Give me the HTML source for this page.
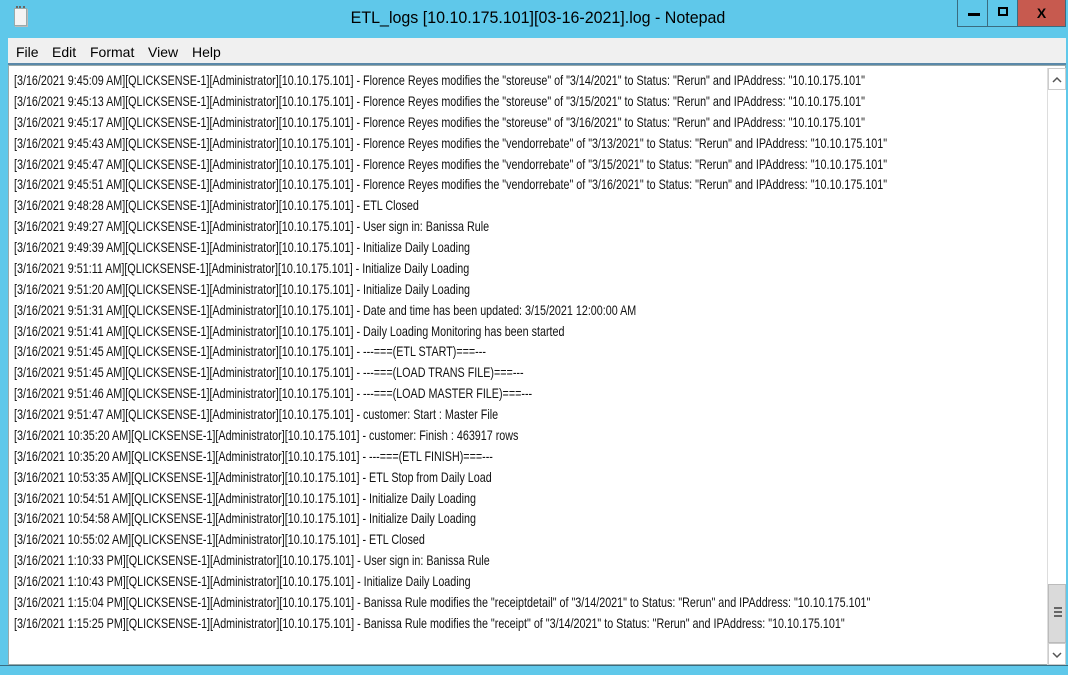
<!DOCTYPE html>
<html><head><style>
*{margin:0;padding:0;box-sizing:border-box}
body{width:1068px;height:675px;background:#5fc8ea;position:relative;overflow:hidden;font-family:"Liberation Sans",Arial,sans-serif}
.title{position:absolute;left:4px;top:9px;width:1068px;text-align:center;font-size:16.5px;color:#000;transform:scaleX(0.97);transform-origin:center}
.icon{position:absolute;left:14px;top:8px;width:13px;height:18px;background:#f4f4f4;border:1px solid #9aa;box-shadow:1px 1px 0 #bbb}
.icon:before{content:"";position:absolute;left:1px;right:1px;top:-3px;height:3px;border-top:2px dotted #666}
.btns{position:absolute;left:957px;top:0;height:27px;border:1px solid #3a6c80;border-top:none;display:flex}
.b{width:30px;height:26px;position:relative}
.b1{border-right:1px solid #3a6c80}
.b2{width:30px;border-right:1px solid #3a6c80}
.b3{width:47px;background:#c75a4f;font-weight:bold;font-size:14px;text-align:center;line-height:26px}
.menu{position:absolute;left:8px;top:38px;width:1058px;height:27px;background:#f0f0f0;border-bottom:2px solid #5a88a8;font-size:14px}
.menu span{position:absolute;top:6px}
.edit{position:absolute;left:8px;top:65px;width:1058px;height:600px;background:#fff;border:1px solid #9aa}
.lines{position:absolute;left:5px;top:4px;font-size:14px;line-height:20.88px;white-space:pre;transform:scaleX(0.768);transform-origin:0 0;color:#111}
.sb{position:absolute;left:1047px;top:68px;width:19px;height:597px;background:#fff;border-left:1px solid #ddd}
.ar{position:absolute;left:0;width:18px;height:22px;border:1px solid #ccc;font-size:14px;text-align:center;line-height:20px;color:#555}
.thumb{position:absolute;left:0;top:516px;width:18px;height:59px;background:#dadada;border:1px solid #bbb}
.thumb i{position:absolute;left:5px;width:8px;height:2px;background:#666}
.bot{position:absolute;left:0;top:665px;width:1068px;height:10px;background:#5fc8ea;border-top:1px solid #3a6c80}
</style></head><body>
<div class="icon"></div>
<div class="title">ETL_logs [10.10.175.101][03-16-2021].log - Notepad</div>
<div class="btns">
<div class="b b1"><div style="position:absolute;left:10px;top:13px;width:12px;height:3px;background:#000"></div></div>
<div class="b b2"><div style="position:absolute;left:10px;top:7px;width:10px;height:9px;border:2px solid #000"></div></div>
<div class="b b3">X</div>
</div>
<div class="menu"><span style="left:8px">File</span><span style="left:44px">Edit</span><span style="left:82px">Format</span><span style="left:140px">View</span><span style="left:184px">Help</span></div>
<div class="edit"><div class="lines">[3/16/2021 9:45:09 AM][QLICKSENSE-1][Administrator][10.10.175.101] - Florence Reyes modifies the "storeuse" of "3/14/2021" to Status: "Rerun" and IPAddress: "10.10.175.101"
[3/16/2021 9:45:13 AM][QLICKSENSE-1][Administrator][10.10.175.101] - Florence Reyes modifies the "storeuse" of "3/15/2021" to Status: "Rerun" and IPAddress: "10.10.175.101"
[3/16/2021 9:45:17 AM][QLICKSENSE-1][Administrator][10.10.175.101] - Florence Reyes modifies the "storeuse" of "3/16/2021" to Status: "Rerun" and IPAddress: "10.10.175.101"
[3/16/2021 9:45:43 AM][QLICKSENSE-1][Administrator][10.10.175.101] - Florence Reyes modifies the "vendorrebate" of "3/13/2021" to Status: "Rerun" and IPAddress: "10.10.175.101"
[3/16/2021 9:45:47 AM][QLICKSENSE-1][Administrator][10.10.175.101] - Florence Reyes modifies the "vendorrebate" of "3/15/2021" to Status: "Rerun" and IPAddress: "10.10.175.101"
[3/16/2021 9:45:51 AM][QLICKSENSE-1][Administrator][10.10.175.101] - Florence Reyes modifies the "vendorrebate" of "3/16/2021" to Status: "Rerun" and IPAddress: "10.10.175.101"
[3/16/2021 9:48:28 AM][QLICKSENSE-1][Administrator][10.10.175.101] - ETL Closed
[3/16/2021 9:49:27 AM][QLICKSENSE-1][Administrator][10.10.175.101] - User sign in: Banissa Rule
[3/16/2021 9:49:39 AM][QLICKSENSE-1][Administrator][10.10.175.101] - Initialize Daily Loading
[3/16/2021 9:51:11 AM][QLICKSENSE-1][Administrator][10.10.175.101] - Initialize Daily Loading
[3/16/2021 9:51:20 AM][QLICKSENSE-1][Administrator][10.10.175.101] - Initialize Daily Loading
[3/16/2021 9:51:31 AM][QLICKSENSE-1][Administrator][10.10.175.101] - Date and time has been updated: 3/15/2021 12:00:00 AM
[3/16/2021 9:51:41 AM][QLICKSENSE-1][Administrator][10.10.175.101] - Daily Loading Monitoring has been started
[3/16/2021 9:51:45 AM][QLICKSENSE-1][Administrator][10.10.175.101] - ---===(ETL START)===---
[3/16/2021 9:51:45 AM][QLICKSENSE-1][Administrator][10.10.175.101] - ---===(LOAD TRANS FILE)===---
[3/16/2021 9:51:46 AM][QLICKSENSE-1][Administrator][10.10.175.101] - ---===(LOAD MASTER FILE)===---
[3/16/2021 9:51:47 AM][QLICKSENSE-1][Administrator][10.10.175.101] - customer: Start : Master File
[3/16/2021 10:35:20 AM][QLICKSENSE-1][Administrator][10.10.175.101] - customer: Finish : 463917 rows
[3/16/2021 10:35:20 AM][QLICKSENSE-1][Administrator][10.10.175.101] - ---===(ETL FINISH)===---
[3/16/2021 10:53:35 AM][QLICKSENSE-1][Administrator][10.10.175.101] - ETL Stop from Daily Load
[3/16/2021 10:54:51 AM][QLICKSENSE-1][Administrator][10.10.175.101] - Initialize Daily Loading
[3/16/2021 10:54:58 AM][QLICKSENSE-1][Administrator][10.10.175.101] - Initialize Daily Loading
[3/16/2021 10:55:02 AM][QLICKSENSE-1][Administrator][10.10.175.101] - ETL Closed
[3/16/2021 1:10:33 PM][QLICKSENSE-1][Administrator][10.10.175.101] - User sign in: Banissa Rule
[3/16/2021 1:10:43 PM][QLICKSENSE-1][Administrator][10.10.175.101] - Initialize Daily Loading
[3/16/2021 1:15:04 PM][QLICKSENSE-1][Administrator][10.10.175.101] - Banissa Rule modifies the "receiptdetail" of "3/14/2021" to Status: "Rerun" and IPAddress: "10.10.175.101"
[3/16/2021 1:15:25 PM][QLICKSENSE-1][Administrator][10.10.175.101] - Banissa Rule modifies the "receipt" of "3/14/2021" to Status: "Rerun" and IPAddress: "10.10.175.101"</div></div>
<div class="sb">
<div class="ar" style="top:0"><svg width="10" height="8" viewBox="0 0 10 8" style="margin-top:7px"><path d="M1 6 L5 2 L9 6" fill="none" stroke="#555" stroke-width="1.5"/></svg></div>
<div class="thumb"><i style="top:22px"></i><i style="top:26px"></i><i style="top:30px"></i></div>
<div class="ar" style="top:575px"><svg width="10" height="8" viewBox="0 0 10 8" style="margin-top:7px"><path d="M1 2 L5 6 L9 2" fill="none" stroke="#555" stroke-width="1.5"/></svg></div>
</div>
<div class="bot"></div>
</body></html>
